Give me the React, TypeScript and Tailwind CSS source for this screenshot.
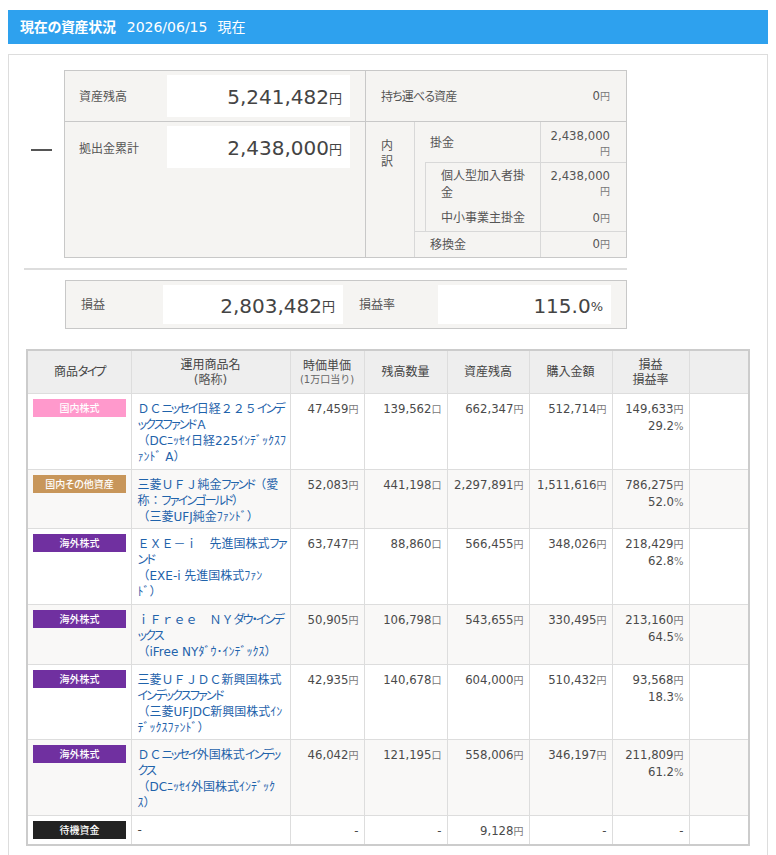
const stack = "font-['DejaVu_Sans','Noto_Sans_CJK_JP',sans-serif]";

type Row = {
  type: string;
  color: string;
  name: string[];
  price: string;
  qty: string;
  asset: string;
  buy: string;
  gain: string;
  rate: string;
  h: string;
};

const rows: Row[] = [
  {
    type: "国内株式",
    color: "bg-[#ff99cc]",
    name: ["ＤＣニッセイ日経２２５インデ", "ックスファンドＡ", "（DCﾆｯｾｲ日経225ｲﾝﾃﾞｯｸｽﾌ", "ｧﾝﾄﾞ A）"],
    price: "47,459",
    qty: "139,562",
    asset: "662,347",
    buy: "512,714",
    gain: "149,633",
    rate: "29.2",
    h: "h-[76px]",
  },
  {
    type: "国内その他資産",
    color: "bg-[#c8965a]",
    name: ["三菱ＵＦＪ純金ファンド（愛", "称：ファインゴールド）", "（三菱UFJ純金ﾌｧﾝﾄﾞ）"],
    price: "52,083",
    qty: "441,198",
    asset: "2,297,891",
    buy: "1,511,616",
    gain: "786,275",
    rate: "52.0",
    h: "h-[59px]",
  },
  {
    type: "海外株式",
    color: "bg-[#7030a0]",
    name: ["ＥＸＥ－ｉ　先進国株式ファ", "ンド", "（EXE-i 先進国株式ﾌｧﾝ", "ﾄﾞ）"],
    price: "63,747",
    qty: "88,860",
    asset: "566,455",
    buy: "348,026",
    gain: "218,429",
    rate: "62.8",
    h: "h-[76px]",
  },
  {
    type: "海外株式",
    color: "bg-[#7030a0]",
    name: ["ｉＦｒｅｅ　ＮＹダウ・インデ", "ックス", "（iFree NYﾀﾞｳ･ｲﾝﾃﾞｯｸｽ）"],
    price: "50,905",
    qty: "106,798",
    asset: "543,655",
    buy: "330,495",
    gain: "213,160",
    rate: "64.5",
    h: "h-[60px]",
  },
  {
    type: "海外株式",
    color: "bg-[#7030a0]",
    name: ["三菱ＵＦＪＤＣ新興国株式", "インデックスファンド", "（三菱UFJDC新興国株式ｲﾝ", "ﾃﾞｯｸｽﾌｧﾝﾄﾞ）"],
    price: "42,935",
    qty: "140,678",
    asset: "604,000",
    buy: "510,432",
    gain: "93,568",
    rate: "18.3",
    h: "h-[75px]",
  },
  {
    type: "海外株式",
    color: "bg-[#7030a0]",
    name: ["ＤＣニッセイ外国株式インデッ", "クス", "（DCﾆｯｾｲ外国株式ｲﾝﾃﾞｯｸ", "ｽ）"],
    price: "46,042",
    qty: "121,195",
    asset: "558,006",
    buy: "346,197",
    gain: "211,809",
    rate: "61.2",
    h: "h-[76px]",
  },
];

const palt = "[font-feature-settings:'palt']";

// only katakana gets the narrow spacing, full-width latin stays wide
const Kana = ({ text }: { text: string }) => (
  <>
    {text.split(/([ァ-ヶー・]+)/).map((part, i) =>
      i % 2 === 1 ? (
        <span key={i} className={`${palt} tracking-[-1.8px]`}>
          {part}
        </span>
      ) : (
        part
      )
    )}
  </>
);

const Unit = ({ children }: { children: string }) => (
  <span className="text-[10px] text-[#777]">{children}</span>
);

const BigValue = ({ value, unit, w }: { value: string; unit: string; w: string }) => (
  <div className={`${w} bg-white flex items-center justify-end pr-[8px] pt-[2px] text-[20px] text-[#444]`}>
    {value}
    <span className="text-[13px] mt-[3px]">{unit}</span>
  </div>
);

const Money = ({ value }: { value: string }) => (
  <div className="text-right text-[11.7px] leading-[15px]">
    {value}
    <br />
    <Unit>円</Unit>
  </div>
);

const Th = ({ children }: { children: React.ReactNode }) => (
  <th className="border-r border-b border-[#ddd] font-normal text-center leading-[15px] align-middle pt-[2px]">{children}</th>
);

const numTd = "border-r border-b border-[#ddd] align-top text-right pt-[7px] pr-[5px] text-[11.7px] leading-[17px] text-[#4a4a4a]";

export default function App() {
  return (
    <div className={`${stack} h-[855px] overflow-hidden bg-white text-[12px] text-[#444] pt-[10px] px-[8px]`}>
      <div className={`h-[34px] bg-[#2ea1ee] text-white text-[14px] flex items-center pl-[12px] ${palt}`}>
        <span className="font-bold tracking-[-0.3px]">現在の資産状況</span>
        <span className="ml-[11px]">2026/06/15</span>
        <span className="ml-[10px]">現在</span>
      </div>

      <div className="mt-[10px] border border-[#ddd] pt-[15px] px-[15px] pb-[20px]">
        <div className="flex">
          <div className="w-[21px] h-[2px] bg-[#555] mt-[79px] ml-[7px] mr-[12px] shrink-0" />
          <div className={`w-[563px] h-[188px] border border-[#c8c8c8] bg-[#f5f4f2] flex text-[#555] ${palt}`}>
            <div className="w-[301px] border-r border-[#c8c8c8]">
              <div className="h-[51px] border-b border-[#c8c8c8] flex items-start pt-[4px]">
                <div className="w-[102px] pl-[14px] leading-[44px]">資産残高</div>
                <BigValue value="5,241,482" unit="円" w="w-[183px] h-[42px]" />
              </div>
              <div className="flex items-start pt-[4px]">
                <div className="w-[102px] pl-[14px] leading-[46px]">拠出金累計</div>
                <BigValue value="2,438,000" unit="円" w="w-[183px] h-[42px]" />
              </div>
            </div>
            <div className="flex-1 text-[12px]">
              <div className="h-[51px] border-b border-[#c8c8c8] flex items-center justify-between pl-[15px] pr-[16px] pt-[2px]">
                <span className="tracking-[-0.9px]">持ち運べる資産</span>
                <span className="text-[11.7px]">
                  0<Unit>円</Unit>
                </span>
              </div>
              <div className="flex h-[135px]">
                <div className="w-[49px] border-r border-[#d8d8d8] pl-[15px] pt-[16px] leading-[16px]">
                  内<br />訳
                </div>
                <div className="flex-1">
                  <div className="h-[40px] flex">
                    <div className="w-[126px] border-r border-[#d8d8d8] pl-[15px] pt-[13px] leading-[16px]">掛金</div>
                    <div className="flex-1 pr-[16px] pt-[7px]">
                      <Money value="2,438,000" />
                    </div>
                  </div>
                  <div className="ml-[10px] h-[69px] border-t border-l border-[#d8d8d8] flex">
                    <div className="w-[115px] border-r border-[#d8d8d8] pl-[15px] pt-[5px] leading-[17px]">
                      個人型加入者掛
                      <br />金<div className="mt-[8px]">中小事業主掛金</div>
                    </div>
                    <div className="flex-1 pr-[16px] pt-[6px]">
                      <Money value="2,438,000" />
                      <div className="text-right text-[11.7px] mt-[11px]">
                        0<Unit>円</Unit>
                      </div>
                    </div>
                  </div>
                  <div className="h-[26px] border-t border-[#d8d8d8] flex items-center">
                    <div className="w-[126px] border-r border-[#d8d8d8] h-full pl-[15px] flex items-center">移換金</div>
                    <div className="flex-1 pr-[16px] text-right text-[11.7px]">
                      0<Unit>円</Unit>
                    </div>
                  </div>
                </div>
              </div>
            </div>
          </div>
        </div>

        <div className="h-[2px] w-[603px] bg-[#ddd] mt-[10px]" />

        <div className={`ml-[41px] mt-[10px] w-[562px] h-[49px] border border-[#c8c8c8] bg-[#f5f4f2] flex items-center text-[#555] ${palt}`}>
          <div className="w-[97px] pl-[15px]">損益</div>
          <BigValue value="2,803,482" unit="円" w="w-[180px] h-[39px]" />
          <div className="w-[95px] pl-[16px]">損益率</div>
          <BigValue value="115.0" unit="%" w="w-[173px] h-[39px]" />
        </div>

        <div className="mt-[20px] ml-[2px] w-[724px] border-2 border-[#ccc]">
          <table className="w-full table-fixed border-collapse">
            <colgroup>
              <col className="w-[103px]" />
              <col className="w-[159px]" />
              <col className="w-[74px]" />
              <col className="w-[83px]" />
              <col className="w-[82px]" />
              <col className="w-[83px]" />
              <col className="w-[77px]" />
              <col className="w-[59px]" />
            </colgroup>
            <thead>
              <tr className="h-[42px] bg-[#eee]">
                <Th>
                  <Kana text="商品タイプ" />
                </Th>
                <Th>
                  運用商品名
                  <br />
                  <span className="text-[#555]">(略称)</span>
                </Th>
                <Th>
                  時価単価
                  <br />
                  <span className="text-[10px] text-[#666] block leading-[12px]">(1万口当り)</span>
                </Th>
                <Th>残高数量</Th>
                <Th>資産残高</Th>
                <Th>購入金額</Th>
                <Th>
                  損益
                  <br />
                  損益率
                </Th>
                <th className="border-b border-[#ddd]" />
              </tr>
            </thead>
            <tbody>
              {rows.map((r, i) => (
                <tr key={i} className={`${r.h} ${i % 2 === 1 ? "bg-[#f9f8f7]" : "bg-white"}`}>
                  <td className="border-r border-b border-[#ddd] align-top pt-[5px] pl-[5px]">
                    <div className={`w-[93px] h-[18px] ${r.color} text-white text-[10px] font-medium text-center leading-[19px] ${palt}`}>
                      {r.type}
                    </div>
                  </td>
                  <td className="border-r border-b border-[#ddd] align-top pt-[7px] pl-[6px] text-[12px] leading-[16.2px] text-[#1f63ab] whitespace-nowrap">
                    {r.name.map((line, j) => (
                      <div key={j}>
                        <Kana text={line} />
                      </div>
                    ))}
                  </td>
                  <td className={numTd}>
                    {r.price}
                    <Unit>円</Unit>
                  </td>
                  <td className={numTd}>
                    {r.qty}
                    <Unit>口</Unit>
                  </td>
                  <td className={numTd}>
                    {r.asset}
                    <Unit>円</Unit>
                  </td>
                  <td className={numTd}>
                    {r.buy}
                    <Unit>円</Unit>
                  </td>
                  <td className={numTd}>
                    {r.gain}
                    <Unit>円</Unit>
                    <br />
                    {r.rate}
                    <Unit>%</Unit>
                  </td>
                  <td className="border-b border-[#ddd]" />
                </tr>
              ))}
              <tr className="h-[29px] bg-white">
                <td className="border-r border-[#ddd] align-top pt-[5px] pl-[5px]">
                  <div className="w-[93px] h-[18px] bg-[#222] text-white text-[10px] font-medium text-center leading-[19px]">待機資金</div>
                </td>
                <td className="border-r border-[#ddd] pl-[6px]">-</td>
                <td className={`${numTd} border-b-0`}>-</td>
                <td className={`${numTd} border-b-0`}>-</td>
                <td className={`${numTd} border-b-0`}>
                  9,128<Unit>円</Unit>
                </td>
                <td className={`${numTd} border-b-0`}>-</td>
                <td className={`${numTd} border-b-0`}>-</td>
                <td />
              </tr>
            </tbody>
          </table>
        </div>
      </div>
    </div>
  );
}
